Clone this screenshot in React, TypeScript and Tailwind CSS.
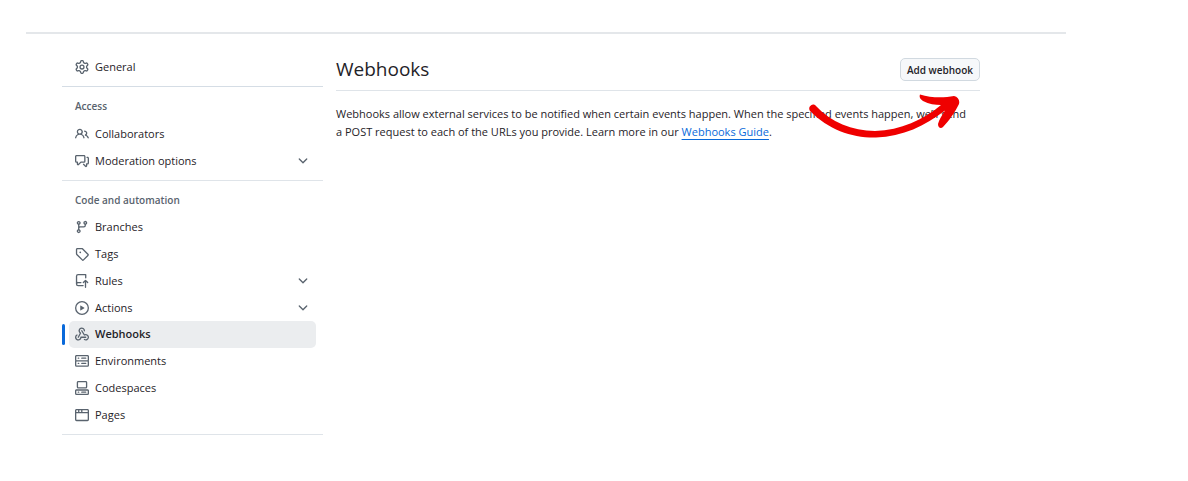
import type { ReactNode } from "react";

const icons = {
  gear: "M8 0a8.2 8.2 0 0 1 .701.031C9.444.095 9.99.645 10.16 1.29l.288 1.107c.018.066.079.158.212.224.231.114.454.243.668.386.123.082.233.09.299.071l1.103-.303c.644-.176 1.392.021 1.82.63.27.385.506.792.704 1.218.315.675.111 1.422-.364 1.891l-.814.806c-.049.048-.098.147-.088.294.016.257.016.515 0 .772-.01.147.038.246.088.294l.814.806c.475.469.679 1.216.364 1.891a7.977 7.977 0 0 1-.704 1.217c-.428.61-1.176.807-1.82.63l-1.102-.302c-.067-.019-.177-.011-.3.071a5.909 5.909 0 0 1-.668.386c-.133.066-.194.158-.211.224l-.29 1.106c-.168.646-.715 1.196-1.458 1.26a8.006 8.006 0 0 1-1.402 0c-.743-.064-1.289-.614-1.458-1.26l-.289-1.106c-.018-.066-.079-.158-.212-.224a5.738 5.738 0 0 1-.668-.386c-.123-.082-.233-.09-.299-.071l-1.103.303c-.644.176-1.392-.021-1.82-.63a8.12 8.12 0 0 1-.704-1.218c-.315-.675-.111-1.422.363-1.891l.815-.806c.05-.048.098-.147.088-.294a6.214 6.214 0 0 1 0-.772c.01-.147-.038-.246-.088-.294l-.815-.806C.635 6.045.431 5.298.746 4.623a7.92 7.92 0 0 1 .704-1.217c.428-.61 1.176-.807 1.82-.63l1.102.302c.067.019.177.011.3-.071.214-.143.437-.272.668-.386.133-.066.194-.158.211-.224l.29-1.106C6.009.645 6.556.095 7.299.03 7.53.01 7.764 0 8 0Zm-.571 1.525c-.036.003-.108.036-.137.146l-.289 1.105c-.147.561-.549.967-.998 1.189-.173.086-.34.183-.5.29-.417.278-.97.423-1.529.27l-1.103-.303c-.109-.03-.175.016-.195.045-.22.312-.412.644-.573.99-.014.031-.021.11.059.19l.815.806c.411.406.562.957.53 1.456a4.709 4.709 0 0 0 0 .582c.032.499-.119 1.05-.53 1.456l-.815.806c-.081.08-.073.159-.059.19.162.346.353.677.573.989.02.03.085.076.195.046l1.102-.303c.56-.153 1.113-.008 1.53.27.161.107.328.204.501.29.447.222.85.629.997 1.189l.289 1.105c.029.109.101.143.137.146a6.6 6.6 0 0 0 1.142 0c.036-.003.108-.036.137-.146l.289-1.105c.147-.561.549-.967.998-1.189.173-.086.34-.183.5-.29.417-.278.97-.423 1.529-.27l1.103.303c.109.029.175-.016.195-.045.22-.313.411-.644.573-.99.014-.031.021-.11-.059-.19l-.815-.806c-.411-.406-.562-.957-.53-1.456a4.709 4.709 0 0 0 0-.582c-.032-.499.119-1.05.53-1.456l.815-.806c.081-.08.073-.159.059-.19a6.464 6.464 0 0 0-.573-.989c-.02-.03-.085-.076-.195-.046l-1.102.303c-.56.153-1.113.008-1.53-.27a4.44 4.44 0 0 0-.501-.29c-.447-.222-.85-.629-.997-1.189l-.289-1.105c-.029-.11-.101-.143-.137-.146a6.6 6.6 0 0 0-1.142 0ZM11 8a3 3 0 1 1-6 0 3 3 0 0 1 6 0ZM9.5 8a1.5 1.5 0 1 0-3.001.001A1.5 1.5 0 0 0 9.5 8Z",
  people: "M2 5.5a3.5 3.5 0 1 1 5.898 2.549 5.508 5.508 0 0 1 3.034 4.084.75.75 0 1 1-1.482.235 4 4 0 0 0-7.9 0 .75.75 0 0 1-1.482-.236A5.507 5.507 0 0 1 3.102 8.05 3.493 3.493 0 0 1 2 5.5ZM11 4a3.001 3.001 0 0 1 2.22 5.018 5.01 5.01 0 0 1 2.56 3.012.749.749 0 0 1-.885.954.752.752 0 0 1-.549-.514 3.507 3.507 0 0 0-2.522-2.372.75.75 0 0 1-.574-.73v-.352a.75.75 0 0 1 .416-.672A1.5 1.5 0 0 0 11 5.5.75.75 0 0 1 11 4Zm-5.5-.5a2 2 0 1 0-.001 3.999A2 2 0 0 0 5.5 3.5Z",
  discussion: "M1.75 1h8.5c.966 0 1.75.784 1.75 1.75v5.5A1.75 1.75 0 0 1 10.25 10H7.061l-2.574 2.573A1.458 1.458 0 0 1 2 11.543V10h-.25A1.75 1.75 0 0 1 0 8.25v-5.5C0 1.784.784 1 1.75 1ZM1.5 2.75v5.5c0 .138.112.25.25.25h1a.75.75 0 0 1 .75.75v2.19l2.72-2.72a.749.749 0 0 1 .53-.22h3.5a.25.25 0 0 0 .25-.25v-5.5a.25.25 0 0 0-.25-.25h-8.5a.25.25 0 0 0-.25.25Zm13 2a.25.25 0 0 0-.25-.25h-.5a.75.75 0 0 1 0-1.5h.5c.966 0 1.75.784 1.75 1.75v5.5A1.75 1.75 0 0 1 14.25 12H14v1.543a1.458 1.458 0 0 1-2.487 1.03L9.22 12.28a.749.749 0 0 1 .326-1.275.749.749 0 0 1 .734.215l2.22 2.22v-2.19a.75.75 0 0 1 .75-.75h1a.25.25 0 0 0 .25-.25Z",
  branch: "M9.5 3.25a2.25 2.25 0 1 1 3 2.122V6A2.5 2.5 0 0 1 10 8.5H6a1 1 0 0 0-1 1v1.128a2.251 2.251 0 1 1-1.5 0V5.372a2.25 2.25 0 1 1 1.5 0v1.836A2.493 2.493 0 0 1 6 7h4a1 1 0 0 0 1-1v-.628A2.25 2.25 0 0 1 9.5 3.25Zm-6 0a.75.75 0 1 0 1.5 0 .75.75 0 0 0-1.5 0Zm8.25-.75a.75.75 0 1 0 0 1.5.75.75 0 0 0 0-1.5ZM4.25 12a.75.75 0 1 0 0 1.5.75.75 0 0 0 0-1.5Z",
  tag: "M1 7.775V2.75C1 1.784 1.784 1 2.75 1h5.025c.464 0 .91.184 1.238.513l6.25 6.25a1.75 1.75 0 0 1 0 2.474l-5.026 5.026a1.75 1.75 0 0 1-2.474 0l-6.25-6.25A1.752 1.752 0 0 1 1 7.775Zm1.5 0c0 .066.026.13.073.177l6.25 6.25a.25.25 0 0 0 .354 0l5.025-5.025a.25.25 0 0 0 0-.354l-6.25-6.25a.25.25 0 0 0-.177-.073H2.75a.25.25 0 0 0-.25.25ZM6 5a1 1 0 1 1 0 2 1 1 0 0 1 0-2Z",
  rules: "M1 2.5A2.5 2.5 0 0 1 3.5 0h8.75a.75.75 0 0 1 .75.75v3.5a.75.75 0 0 1-1.5 0V1.5h-8a1 1 0 0 0-1 1v6.708A2.493 2.493 0 0 1 3.5 9h3.25a.75.75 0 0 1 0 1.5H3.5a1 1 0 0 0 0 2h5.75a.75.75 0 0 1 0 1.5H3.5A2.5 2.5 0 0 1 1 11.5ZM12.75 15.25a.75.75 0 0 1-1.5 0V9.06l-1.22 1.22a.75.75 0 0 1-1.06-1.06l2.5-2.5a.75.75 0 0 1 1.06 0l2.5 2.5a.75.75 0 0 1-1.06 1.06l-1.22-1.22Z",
  play: "M8 0a8 8 0 1 1 0 16A8 8 0 0 1 8 0ZM1.5 8a6.5 6.5 0 1 0 13 0 6.5 6.5 0 0 0-13 0Zm4.879-2.773 4.264 2.559a.25.25 0 0 1 0 .428l-4.264 2.559A.25.25 0 0 1 6 10.559V5.442a.25.25 0 0 1 .379-.215Z",
  webhook: "M5.5 4.25a2.25 2.25 0 0 1 4.5 0 .75.75 0 0 0 1.5 0 3.75 3.75 0 1 0-6.14 2.889l-2.272 4.258a.75.75 0 0 0 1.324.706L7 7.25a.75.75 0 0 0-.309-1.015A2.25 2.25 0 0 1 5.5 4.25ZM7.364 3.607a.75.75 0 0 1 1.03.257l2.608 4.349a3.75 3.75 0 1 1-.628 6.785.75.75 0 0 1 .752-1.299 2.25 2.25 0 1 0-.033-3.88.75.75 0 0 1-1.03-.256L7.107 4.636a.75.75 0 0 1 .257-1.03ZM2.9 8.776A.75.75 0 0 1 2.625 9.8 2.25 2.25 0 1 0 6 11.75a.75.75 0 0 1 .75-.751h5.5a.75.75 0 0 1 0 1.5H7.425a3.751 3.751 0 1 1-5.55-3.998.75.75 0 0 1 1.024.274Z",
  server: "M1.75 1h12.5c.966 0 1.75.784 1.75 1.75v4c0 .372-.116.717-.314 1 .198.283.314.628.314 1v4a1.75 1.75 0 0 1-1.75 1.75H1.75A1.75 1.75 0 0 1 0 12.75v-4c0-.358.109-.707.314-1a1.739 1.739 0 0 1-.314-1v-4C0 1.784.784 1 1.75 1ZM1.5 2.75v4c0 .138.112.25.25.25h12.5a.25.25 0 0 0 .25-.25v-4a.25.25 0 0 0-.25-.25H1.75a.25.25 0 0 0-.25.25Zm.25 5.75a.25.25 0 0 0-.25.25v4c0 .138.112.25.25.25h12.5a.25.25 0 0 0 .25-.25v-4a.25.25 0 0 0-.25-.25ZM7 4.75A.75.75 0 0 1 7.75 4h4.5a.75.75 0 0 1 0 1.5h-4.5A.75.75 0 0 1 7 4.75ZM7.75 10h4.5a.75.75 0 0 1 0 1.5h-4.5a.75.75 0 0 1 0-1.5ZM3 4.75A.75.75 0 0 1 3.75 4h.5a.75.75 0 0 1 0 1.5h-.5A.75.75 0 0 1 3 4.75ZM3.75 10h.5a.75.75 0 0 1 0 1.5h-.5a.75.75 0 0 1 0-1.5Z",
  codespaces: "M0 11.25c0-.966.784-1.75 1.75-1.75h12.5c.966 0 1.75.784 1.75 1.75v3A1.75 1.75 0 0 1 14.25 16H1.75A1.75 1.75 0 0 1 0 14.25Zm2-9.5C2 .784 2.784 0 3.75 0h8.5C13.216 0 14 .784 14 1.75v5a1.75 1.75 0 0 1-1.75 1.75h-8.5A1.75 1.75 0 0 1 2 6.75Zm1.75-.25a.25.25 0 0 0-.25.25v5c0 .138.112.25.25.25h8.5a.25.25 0 0 0 .25-.25v-5a.25.25 0 0 0-.25-.25Zm-2 9.5a.25.25 0 0 0-.25.25v3c0 .138.112.25.25.25h12.5a.25.25 0 0 0 .25-.25v-3a.25.25 0 0 0-.25-.25ZM7 12.75a.75.75 0 0 1 .75-.75h4.5a.75.75 0 0 1 0 1.5h-4.5a.75.75 0 0 1-.75-.75Zm-4 0a.75.75 0 0 1 .75-.75h.5a.75.75 0 0 1 0 1.5h-.5a.75.75 0 0 1-.75-.75Z",
  browser: "M0 2.75C0 1.784.784 1 1.75 1h12.5c.966 0 1.75.784 1.75 1.75v10.5A1.75 1.75 0 0 1 14.25 15H1.75A1.75 1.75 0 0 1 0 13.25ZM14.5 6h-13v7.25c0 .138.112.25.25.25h12.5a.25.25 0 0 0 .25-.25Zm-6-3.5v2h6V2.75a.25.25 0 0 0-.25-.25ZM5 2.5v2h2v-2Zm-3.25 0a.25.25 0 0 0-.25.25V4.5h2v-2Z",
  chevron: "M12.78 5.22a.749.749 0 0 1 0 1.06l-4.25 4.25a.749.749 0 0 1-1.06 0L3.22 6.28a.749.749 0 1 1 1.06-1.06L8 8.939l3.72-3.719a.749.749 0 0 1 1.06 0Z",
};

type IconName = keyof typeof icons;

function Icon({ name }: { name: IconName }) {
  return (
    <svg viewBox="0 0 16 16" className="size-[14px] shrink-0 fill-[#59636e]" aria-hidden="true">
      <path d={icons[name]} />
    </svg>
  );
}

type Item = { label: string; icon: IconName; expandable?: boolean; active?: boolean };

const itemClass = "flex w-full items-center gap-[6px] rounded-[5px] px-[6px] text-left";

function NavItem({ label, icon, expandable, active }: Item) {
  if (expandable) {
    return (
      <li className="flex px-[7px]">
        <button type="button" aria-expanded="false" className={itemClass}>
          <Icon name={icon} />
          <span className="flex-1">{label}</span>
          <Icon name="chevron" />
        </button>
      </li>
    );
  }
  if (active) {
    return (
      <li className="flex items-stretch gap-1 pr-[7px]">
        <span className="my-[3px] w-[3px] shrink-0 rounded-[2px] bg-[#0969da]" />
        <a href="#webhooks" aria-current="page" className={`${itemClass} bg-[#ebedef] font-semibold`}>
          <Icon name={icon} />
          {label}
        </a>
      </li>
    );
  }
  return (
    <li className="flex px-[7px]">
      <a href={`#${label.toLowerCase()}`} className={itemClass}>
        <Icon name={icon} />
        {label}
      </a>
    </li>
  );
}

function Section({ title, children }: { title: string; children: ReactNode }) {
  return (
    <section className="border-b border-[#dfe4e9] pt-[10px] pb-[6px]">
      <h2 className="mb-[5px] px-[13px] text-[10px] leading-[18px] font-semibold text-[#59636e]">{title}</h2>
      {children}
    </section>
  );
}

const access: Item[] = [
  { label: "Collaborators", icon: "people" },
  { label: "Moderation options", icon: "discussion", expandable: true },
];

const automation: Item[] = [
  { label: "Branches", icon: "branch" },
  { label: "Tags", icon: "tag" },
  { label: "Rules", icon: "rules", expandable: true },
  { label: "Actions", icon: "play", expandable: true },
  { label: "Webhooks", icon: "webhook", active: true },
  { label: "Environments", icon: "server" },
  { label: "Codespaces", icon: "codespaces" },
  { label: "Pages", icon: "browser" },
];

export default function App() {
  return (
    <div className="min-h-screen bg-white pt-8 pr-[122px] pl-[26px] font-['Open_Sans','Noto_Sans',sans-serif] text-[11px] leading-[18px] text-[#1f2328]">
      <div className="flex gap-[13px] border-t-2 border-[#e4e7ea] pt-[19px] pr-[86px] pl-9">
        <nav aria-label="Settings" className="w-[261px] shrink-0">
          <ul className="grid auto-rows-[27px] border-b border-[#d5dde5] pb-[6px]">
            <NavItem label="General" icon="gear" />
          </ul>
          <Section title="Access">
            <ul className="grid min-h-[54px] auto-rows-fr">
              {access.map((item) => (
                <NavItem key={item.label} {...item} />
              ))}
            </ul>
          </Section>
          <Section title="Code and automation">
            <ul className="grid min-h-[214px] auto-rows-fr">
              {automation.map((item) => (
                <NavItem key={item.label} {...item} />
              ))}
            </ul>
          </Section>
        </nav>
        <main className="min-w-0 flex-1 pt-1">
          <header className="flex items-center justify-between border-b border-[#dfe4e9] pb-[8px]">
            <h1 className="text-[19px] leading-[25px]">Webhooks</h1>
            <div className="relative">
              <button
                type="button"
                className="block h-[23px] rounded-[5px] border border-[#d1d9e0] bg-[#f6f8fa] px-[6px] text-[10px] leading-4 font-semibold whitespace-nowrap"
              >
                Add webhook
              </button>
              <svg
                viewBox="0 0 152 46"
                className="pointer-events-none absolute top-[35px] right-[19px] h-[46px] w-[152px] fill-[#ef0000]"
                aria-hidden="true"
              >
                <path d="M4 11.500C1 12 -1 15 1 18C20 37 43 45 67 44.500C94 43.500 116 33 136 17.500C133 22 130 27 129 31C129 35 132 36 134 34C140 28 146 19 150 11C151 7 149 4 145 3C135 5 122 5 111 1.500C110 4 111 6 114 8C120 11 126 12 132 12C114 27 92 37 66 38C43 38 22 29 7 13Q6 11 4 11.500Z" />
              </svg>
            </div>
          </header>
          <p className="pt-[14px]">
            Webhooks allow external services to be notified when certain events happen. When the specified events happen, we’ll send
            a&nbsp;POST request to each of the URLs you provide. Learn more in our{" "}
            <a href="#webhooks-guide" className="text-[#0969da] underline underline-offset-3">
              Webhooks Guide
            </a>
            .
          </p>
        </main>
      </div>
    </div>
  );
}
